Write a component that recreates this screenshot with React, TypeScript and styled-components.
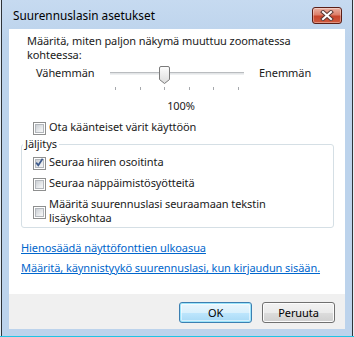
import React from 'react';
import styled, { createGlobalStyle } from 'styled-components';

const Global = createGlobalStyle`
  html, body { margin: 0; padding: 0; background: #e4ecf5; }
  body {
    width: 354px; height: 337px; overflow: hidden;
    font-family: "Noto Sans", "DejaVu Sans", sans-serif;
    font-size: 11px; letter-spacing: -0.08px; line-height: 14px; color: #1a1a1a;
  }
`;

const Screen = styled.div`
  width: 354px; height: 337px;
  display: flex; flex-direction: column;
`;

const Window = styled.div`
  margin-left: 1px; width: 352px; height: 336px; box-sizing: border-box;
  border-left: 1px solid #2e3338; border-right: 1px solid #2e3338;
  background: linear-gradient(#c6daf0, #bcd3ec 40px, #bcd3ec);
  padding: 0 7px 7px 7px;
  display: flex; flex-direction: column;
`;

const TaskLine = styled.div`
  height: 1px; background: #1fc4e4;
`;

const TitleBar = styled.div`
  height: 29px; display: flex; align-items: flex-start; justify-content: space-between;
  padding: 0 3px 0 4px;
`;

const Title = styled.span`
  margin-top: 8px; color: #000; line-height: 14px; font-size: 11.8px; letter-spacing: 0;
`;

const CloseButton = styled.div`
  margin-top: 7px; width: 30px; height: 17px; box-sizing: border-box;
  border: 1px solid #5a1f17; border-radius: 3px;
  background: linear-gradient(#eab1a3, #dd7f69 45%, #c8452c 55%, #cf5a3e);
  box-shadow: inset 0 0 0 1px rgba(255,255,255,0.35);
  display: flex; align-items: center; justify-content: center;
`;

const Client = styled.div`
  height: 300px; background: #fff; display: flex; flex-direction: column;
`;

const Content = styled.div`
  flex: 1; display: flex; flex-direction: column;
  padding-top: 5px;
`;

const Intro = styled.p`
  margin: 0 0 0 18px; width: 300px;
`;

const SliderRow = styled.div`
  margin-top: 2px; margin-left: 27px;
  display: grid; grid-template-columns: 74px 134px auto; column-gap: 0;
`;

const SideLabel = styled.span<{ $pad?: number }>`
  margin-top: 2px; padding-left: ${p => p.$pad ?? 0}px; white-space: nowrap;
`;

const SliderBox = styled.div`
  position: relative; height: 26px;
`;

const Track = styled.div`
  position: absolute; left: 0; right: 0; top: 8px; height: 3px; box-sizing: border-box;
  border-top: 1px solid #b9bcbf; border-bottom: 1px solid #eef0f1;
  background: #e3e5e7;
`;

const Thumb = styled.svg`
  position: absolute; top: 2px; left: 49px;
`;

const Ticks = styled.div`
  position: absolute; left: 5px; right: 5px; top: 23px; height: 3px;
  display: flex; justify-content: space-between;
`;

const Tick = styled.span`
  width: 1px; height: 3px; background: #a6a9ad;
`;

const Percent = styled.div`
  grid-column: 2; margin-top: 9px; text-align: center; padding-left: 8px;
`;

const CheckRow = styled.label<{ $top?: number; $center?: boolean }>`
  display: flex; align-items: ${p => (p.$center ? 'center' : 'flex-start')};
  margin-top: ${p => p.$top ?? 0}px; margin-left: 24px; gap: 3px;
  white-space: nowrap;
`;

const Box = styled.span`
  flex: none; width: 13px; height: 13px; box-sizing: border-box; margin-top: 2px;
  border: 1px solid #8e8f8f; background: #fff; padding: 1px;
  display: flex;
`;

const BoxInner = styled.span`
  flex: 1; position: relative;
  border: 1px solid #b3b7bc;
  background: linear-gradient(135deg, #cbcfd4, #eceef0 70%, #f7f7f7);
`;

const CheckMark = styled.svg`
  position: absolute; left: -2px; top: -3px;
`;

const Group = styled.fieldset`
  margin: 2px 11px 0 12px; padding: 0 0 2px 0;
  border: 1px solid #d5dfe5; border-radius: 3px;
  display: flex; flex-direction: column;
`;

const Legend = styled.legend`
  margin-left: 1px; padding: 0 2px; line-height: 14px;
`;

const GroupRows = styled.div`
  display: flex; flex-direction: column; padding-top: 4px;
  & > label { margin-left: 11px; }
`;

const Links = styled.div`
  margin: 13px 0 0 12px; display: flex; flex-direction: column; gap: 6px;
`;

const Link = styled.a`
  color: #0066cc; text-decoration: underline; cursor: pointer; align-self: flex-start;
  white-space: nowrap;
`;

const Footer = styled.div`
  height: 35px; background: #f0f0f0; display: flex; justify-content: flex-end;
  align-items: flex-start; gap: 10px; padding: 8px 10px 0 0; box-sizing: border-box;
`;

const Button = styled.button<{ $default?: boolean }>`
  width: 73px; height: 21px; box-sizing: border-box; padding: 0;
  font: inherit; line-height: 14px; color: #000; letter-spacing: inherit;
  border-radius: 3px;
  border: 1px solid ${p => (p.$default ? '#3c7fb1' : '#707070')};
  background: ${p =>
    p.$default
      ? 'linear-gradient(#eaf6fd, #d9f0fc 50%, #bee6fd 50%, #a7d9f5)'
      : 'linear-gradient(#f2f2f2, #ebebeb 50%, #dddddd 50%, #cfcfcf)'};
  box-shadow: ${p =>
    p.$default ? 'inset 0 0 0 1px #9be4fb, inset 0 0 0 2px rgba(255,255,255,0.5)' : 'inset 0 0 0 1px #fcfcfc'};
`;

const CheckBox: React.FC<{ checked?: boolean }> = ({ checked }) => (
  <Box>
    <BoxInner>
      {checked && (
        <CheckMark width="11" height="11" viewBox="0 0 11 11">
          <path d="M2.2 5.6 L4.3 8.2 L8.6 1.8" fill="none" stroke="#3d5a8c" strokeWidth="1.7" />
        </CheckMark>
      )}
    </BoxInner>
  </Box>
);

export default function App() {
  return (
    <Screen>
      <Global />
      <Window>
        <TitleBar>
          <Title>Suurennuslasin asetukset</Title>
          <CloseButton>
            <svg width="14" height="11" viewBox="0 0 14 11">
              <path d="M3 2 L11 9 M11 2 L3 9" stroke="#5b3a36" strokeWidth="4" strokeLinecap="square" />
              <path d="M3 2 L11 9 M11 2 L3 9" stroke="#fff" strokeWidth="2" strokeLinecap="square" />
            </svg>
          </CloseButton>
        </TitleBar>
        <Client>
          <Content>
            <Intro>Määritä, miten paljon näkymä muuttuu zoomatessa kohteessa:</Intro>
            <SliderRow>
              <SideLabel>Vähemmän</SideLabel>
              <SliderBox>
                <Track />
                <Thumb width="11" height="18" viewBox="0 0 11 18">
                  <defs>
                    <linearGradient id="tg" x1="0" y1="0" x2="0" y2="1">
                      <stop offset="0" stopColor="#fdfdfd" />
                      <stop offset="1" stopColor="#dcdcdc" />
                    </linearGradient>
                  </defs>
                  <path d="M0.5 2 Q0.5 0.5 2 0.5 H9 Q10.5 0.5 10.5 2 V13.5 L5.5 17.5 L0.5 13.5 Z" fill="url(#tg)" stroke="#7a7a7a" />
                </Thumb>
                <Ticks>
                  {Array.from({ length: 6 }).map((_, i) => (
                    <Tick key={i} />
                  ))}
                </Ticks>
              </SliderBox>
              <SideLabel $pad={15}>Enemmän</SideLabel>
              <Percent>100%</Percent>
            </SliderRow>
            <CheckRow $top={7}>
              <CheckBox />
              <span>Ota käänteiset värit käyttöön</span>
            </CheckRow>
            <Group>
              <Legend>Jäljitys</Legend>
              <GroupRows>
                <CheckRow>
                  <CheckBox checked />
                  <span>Seuraa hiiren osoitinta</span>
                </CheckRow>
                <CheckRow $top={6}>
                  <CheckBox />
                  <span>Seuraa näppäimistösyötteitä</span>
                </CheckRow>
                <CheckRow $top={6} $center>
                  <CheckBox />
                  <span>Määritä suurennuslasi seuraamaan tekstin<br />lisäyskohtaa</span>
                </CheckRow>
              </GroupRows>
            </Group>
            <Links>
              <Link>Hienosäädä näyttöfonttien ulkoasua</Link>
              <Link>Määritä, käynnistyykö suurennuslasi, kun kirjaudun sisään.</Link>
            </Links>
          </Content>
          <Footer>
            <Button $default>OK</Button>
            <Button>Peruuta</Button>
          </Footer>
        </Client>
      </Window>
      <TaskLine />
    </Screen>
  );
}
